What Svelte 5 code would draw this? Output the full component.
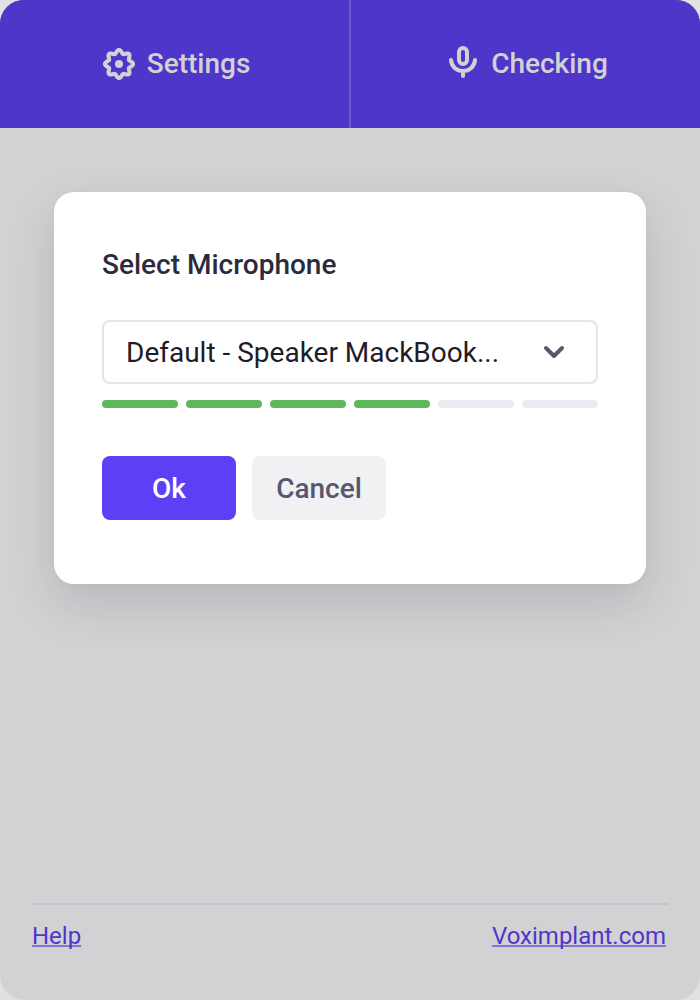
<script>
  let device = $state('default');
  const level = 4;
  const segments = [1, 2, 3, 4, 5, 6];

  // Eight-lobed outline of the settings gear.
  const gear =
    'M' +
    Array.from({ length: 96 }, (_, i) => {
      const a = (i / 96) * Math.PI * 2;
      const r = 12.4 + 1.7 * Math.cos(8 * a);
      return `${(16 + r * Math.cos(a)).toFixed(2)} ${(16 + r * Math.sin(a)).toFixed(2)}`;
    }).join('L') +
    'Z';
</script>

<div class="app">
  <nav class="tabs">
    <button class="tab" type="button">
      <svg width="32" height="32" viewBox="0 0 32 32" fill="none" aria-hidden="true">
        <path d={gear} stroke="currentColor" stroke-width="4" stroke-linejoin="round" />
        <circle cx="16" cy="16" r="4" fill="currentColor" />
      </svg>
      <span>Settings</span>
    </button>
    <button class="tab" type="button">
      <svg width="32" height="36" viewBox="0 0 32 36" fill="none" stroke="currentColor" stroke-width="4" stroke-linecap="round" aria-hidden="true">
        <rect x="12" y="2" width="8" height="16" rx="4" />
        <path d="M4 14C4.500 20.500 9.500 25 16 25S27.500 20.500 28 14M16 25V30" />
      </svg>
      <span>Checking</span>
    </button>
  </nav>

  <main>
    <form class="card" onsubmit={(e) => e.preventDefault()}>
      <label class="title" for="microphone">Select Microphone</label>
      <div class="field">
        <select id="microphone" bind:value={device}>
          <option value="default">Default - Speaker MackBook...</option>
        </select>
        <svg class="chevron" width="24" height="24" viewBox="0 0 24 24" fill="none" aria-hidden="true">
          <path d="M4 8L12 16L20 8" stroke="currentColor" stroke-width="4" stroke-linecap="round" stroke-linejoin="round" />
        </svg>
      </div>
      <div class="meter">
        {#each segments as n}
          <span class="segment" class:on={n <= level}></span>
        {/each}
      </div>
      <div class="actions">
        <button class="btn primary" type="submit">Ok</button>
        <button class="btn" type="button">Cancel</button>
      </div>
    </form>
  </main>

  <footer>
    <a href="#help">Help</a>
    <a href="#voximplant">Voximplant.com</a>
  </footer>
</div>

<style>
  :global(body) {
    background: #e0e2e2;
  }
  .app {
    display: flex;
    flex-direction: column;
    box-sizing: border-box;
    min-height: 100vh;
    overflow: hidden;
    border-radius: 24px;
    background: #d2d2d4;
    font-family: Roboto, sans-serif;
  }
  button,
  select {
    margin: 0;
    font-family: inherit;
    cursor: pointer;
  }
  .tabs {
    display: grid;
    grid-template-columns: 1fr 1fr;
    gap: 2px;
    height: 128px;
    background: #6e56ce;
  }
  .tab {
    display: flex;
    align-items: center;
    justify-content: center;
    gap: 12px;
    padding: 0 0 0 4px;
    border: 0;
    background: #4f36cb;
    color: #d2d2d4;
    font-size: 28px;
    font-weight: 500;
    line-height: 34px;
  }
  main {
    flex: 1;
    padding: 64px 54px;
  }
  .card {
    display: flex;
    flex-direction: column;
    padding: 56px 48px 64px;
    border-radius: 20px;
    background: #fff;
    box-shadow: 0 20px 48px rgba(40, 41, 61, 0.15), 0 4px 16px rgba(40, 41, 61, 0.02);
  }
  .title {
    color: #2b2b3d;
    font-size: 28px;
    font-weight: 500;
    line-height: 34px;
  }
  .field {
    position: relative;
    margin-top: 38px;
  }
  select {
    display: block;
    box-sizing: border-box;
    width: 100%;
    height: 64px;
    padding: 0 64px 0 22px;
    border: 2px solid #e3e3e9;
    border-radius: 8px;
    appearance: none;
    background: #fff;
    color: #1f1c28;
    font-size: 28px;
  }
  .chevron {
    position: absolute;
    top: 20px;
    right: 32px;
    color: #565870;
    pointer-events: none;
  }
  .meter {
    display: flex;
    gap: 8px;
    margin-top: 16px;
  }
  .segment {
    flex: 1;
    height: 8px;
    border-radius: 4px;
    background: #ebebf1;
  }
  .segment.on {
    background: #5fb85c;
  }
  .actions {
    display: flex;
    gap: 16px;
    margin-top: 48px;
  }
  .btn {
    width: 134px;
    height: 64px;
    padding: 0;
    border: 0;
    border-radius: 8px;
    background: #f1f1f4;
    color: #565870;
    font-size: 28px;
    font-weight: 500;
  }
  .btn.primary {
    background: #5d40f6;
    color: #fff;
  }
  footer {
    display: flex;
    justify-content: space-between;
    margin: 0 32px;
    padding: 16px 2px 48px 0;
    border-top: 2px solid #c4c4c9;
  }
  a {
    color: #4f36cb;
    font-size: 24px;
    line-height: 31px;
    text-decoration: underline;
    text-decoration-color: #866fd8;
    text-decoration-thickness: 2px;
    text-decoration-skip-ink: none;
  }
</style>
